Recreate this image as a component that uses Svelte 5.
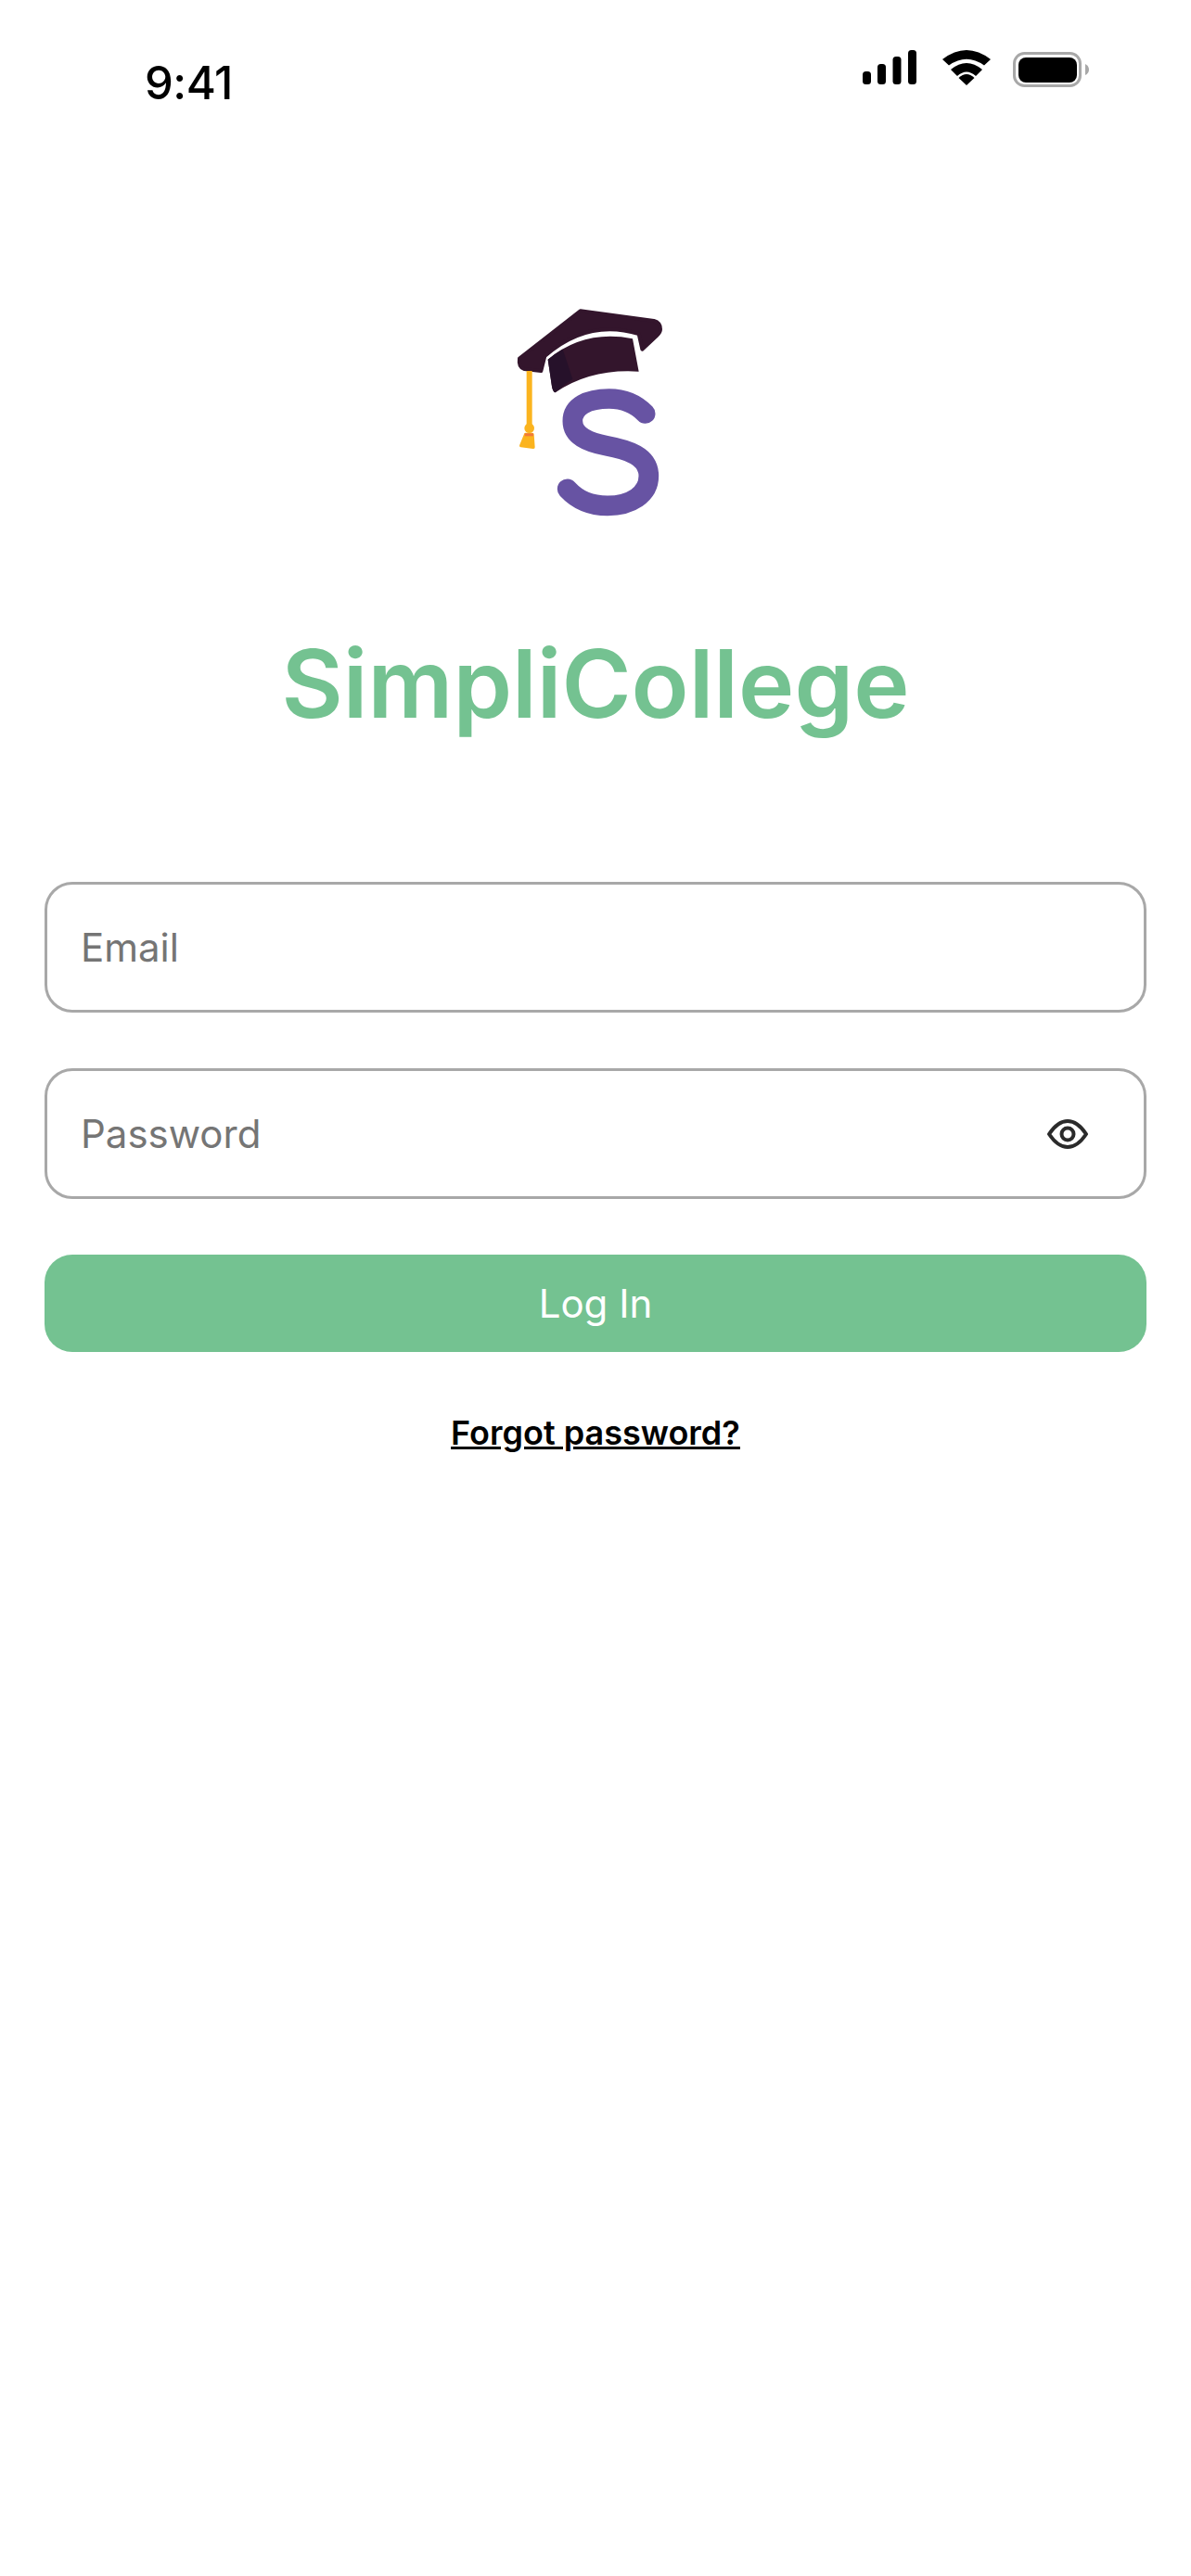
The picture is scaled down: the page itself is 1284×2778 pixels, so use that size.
<script>
  const title = 'SimpliCollege';
</script>

<div class="screen">
  <header class="status">
    <span class="time">9:41</span>
    <div class="indicators">
      <svg class="signal" viewBox="0 0 58 37" aria-hidden="true">
        <rect x="0" y="23" width="9" height="14" rx="3.5" />
        <rect x="16" y="15" width="9" height="22" rx="3.5" />
        <rect x="32.5" y="7" width="9" height="30" rx="3.5" />
        <rect x="49" y="0" width="9" height="37" rx="3.5" />
      </svg>
      <svg class="wifi" viewBox="0 0 52 38" aria-hidden="true">
        <path d="M0 10 Q26 -10 52 10 L45 16.5 Q26 3 7 16.5 Z" />
        <path d="M9 21 Q26 7 43 21 L36 28 Q26 19 16 28 Z" />
        <path d="M17.5 30 Q26 22 34.5 30 L26 38 Z" />
      </svg>
      <svg class="battery" viewBox="0 0 82 38" aria-hidden="true">
        <rect x="1.5" y="1.5" width="71" height="35" rx="11" fill="none" stroke="#a8a8a8" stroke-width="3" />
        <rect x="6" y="6" width="63" height="27" rx="8" fill="#000" />
        <path d="M78 13 Q82 15 82 19 Q82 23 78 25 Z" fill="#a8a8a8" />
      </svg>
    </div>
  </header>

  <main class="content">
    <svg class="logo" viewBox="6 0 660 780" aria-hidden="true">
      <path fill="#33152c" stroke="#33152c" stroke-width="12" stroke-linejoin="round" d="M287 76 L525 108 Q546 114 546 135 Q546 145 535 155 L487 200 L476 150 Q310 100 172 222 L160 270 L106 264 Q86 258 90 230 Z" />
      <path fill="#33152c" d="M182 233 Q300 135 456 166 L476 272 Q320 262 206 340 Q198 338 195 320 Z" />
      <path fill="#26112a" d="M182 233 Q208 212 230 200 L262 296 Q232 314 206 340 Q198 338 195 320 Z" />
      <rect x="113" y="270" width="18" height="180" fill="#fbb41f" />
      <circle cx="122" cy="455" r="16" fill="#fbb41f" />
      <path fill="#fbb41f" stroke="#fbb41f" stroke-width="10" stroke-linejoin="round" d="M110 475 L132 475 L135 517 L95 512 Z" />
      <rect x="107" y="472" width="28" height="9" fill="#f2793a" />
      <path fill="none" stroke="#6753a3" stroke-width="65" stroke-linecap="round" d="M497 408 C465 375 425 360 380 360 C310 360 262 385 262 432 C262 480 310 500 370 512 C440 525 508 545 508 610 C508 670 450 706 375 706 C320 706 280 690 245 652" />
    </svg>

    <h1 class="title">{title}</h1>

    <form class="form">
      <div class="field"><span class="placeholder">Email</span></div>
      <div class="field">
        <span class="placeholder">Password</span>
        <svg class="eye" viewBox="0 0 44 32" aria-hidden="true">
          <path fill="none" stroke="#2b2b2b" stroke-width="4" stroke-linejoin="round" d="M2 16 C8 7 14 2 22 2 C30 2 36 7 42 16 C36 25 30 30 22 30 C14 30 8 25 2 16 Z" />
          <circle cx="22" cy="16" r="6.5" fill="none" stroke="#2b2b2b" stroke-width="4" />
        </svg>
      </div>
      <button class="login" type="button">Log In</button>
    </form>

    <a class="forgot" href="#forgot">Forgot password?</a>
  </main>
</div>

<style>
  :global(body) {
    margin: 0;
    background: #fff;
  }

  .screen {
    display: flex;
    flex-direction: column;
    min-height: 2778px;
    background: #fff;
    font-family: Inter, "Noto Sans", sans-serif;
  }

  .status {
    display: flex;
    justify-content: space-between;
    align-items: flex-start;
    height: 310px;
    box-sizing: border-box;
    padding: 54px 110px 0 156px;
  }

  .time {
    margin-top: 7px;
    font-size: 49px;
    line-height: 58px;
    font-weight: 500;
    letter-spacing: -0.5px;
    color: #000;
  }

  .indicators {
    display: flex;
    align-items: flex-start;
  }

  .signal {
    width: 58px;
    height: 37px;
  }

  .wifi {
    width: 52px;
    height: 38px;
    margin: 0 24px 0 28px;
  }

  .battery {
    width: 82px;
    height: 38px;
    margin-top: 2px;
  }

  .content {
    display: flex;
    flex-direction: column;
    align-items: center;
    padding: 0 48px;
  }

  .logo {
    width: 220px;
    height: 260px;
  }

  .title {
    margin: 107px 0 0;
    font-size: 102px;
    line-height: 120px;
    font-weight: 600;
    color: #74c291;
  }

  .form {
    align-self: stretch;
    display: flex;
    flex-direction: column;
    margin-top: 154px;
  }

  .field {
    display: flex;
    align-items: center;
    justify-content: space-between;
    box-sizing: border-box;
    height: 141px;
    margin-bottom: 60px;
    padding: 0 60px 0 36px;
    border: 3px solid #a8a8a8;
    border-radius: 30px;
    background: #fff;
  }

  .placeholder {
    font-size: 42px;
    color: #757575;
  }

  .eye {
    width: 44px;
    height: 32px;
  }

  .login {
    height: 105px;
    border: 0;
    border-radius: 30px;
    background: #74c291;
    color: #fff;
    font-family: inherit;
    font-size: 42px;
    font-weight: 400;
    padding: 0;
  }

  .forgot {
    margin-top: 65px;
    font-size: 36px;
    line-height: 44px;
    font-weight: 600;
    color: #000;
    text-decoration: underline;
  }
</style>
